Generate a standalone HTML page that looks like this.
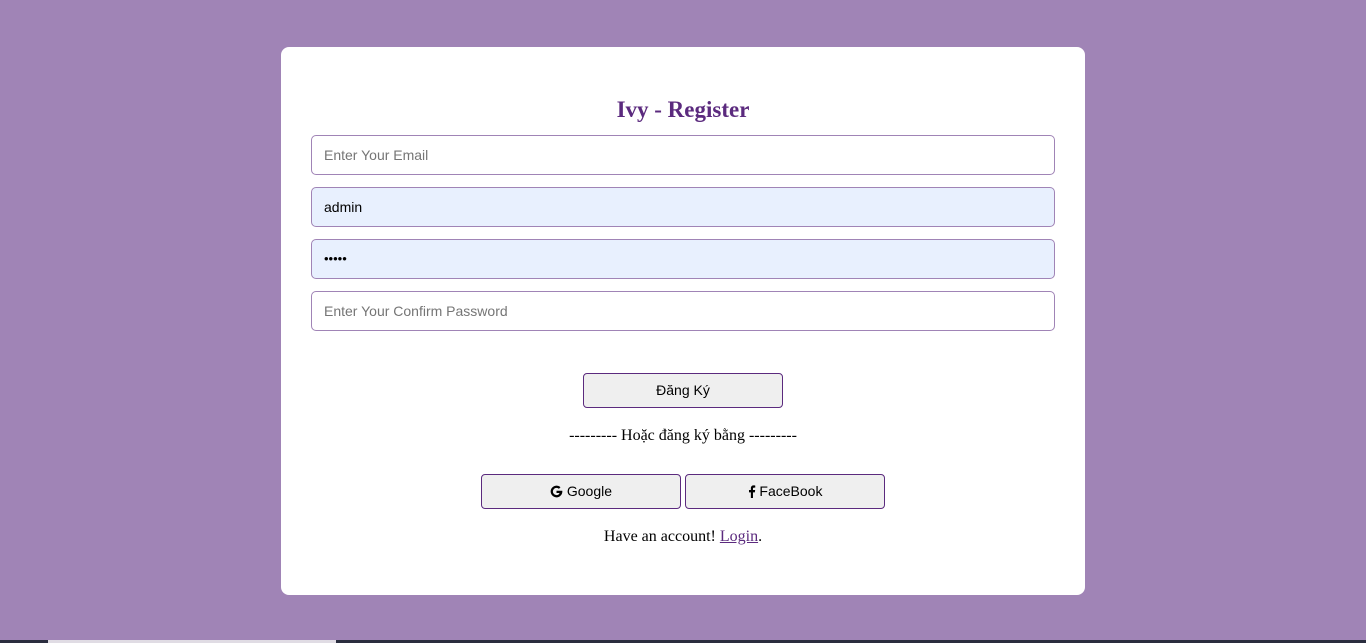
<!DOCTYPE html>
<html><head><meta charset="utf-8"><style>
body{margin:0;width:1366px;height:643px;background:#a084b6;position:relative;overflow:hidden;font-family:"Liberation Serif",serif}
.card{position:absolute;left:281px;top:47px;width:804px;height:548px;background:#fff;border-radius:8px}
h2{position:absolute;left:0;right:0;top:96px;margin:0;text-align:center;font-size:23px;font-weight:bold;color:#5b2a7e;line-height:28px}
.in{position:absolute;left:311px;height:38px;border:1px solid #a084b6;border-radius:5px;font-family:"Liberation Sans",sans-serif;font-size:14px;line-height:38px;padding-left:12px;width:730px}
.ph{color:#757575;background:#fff}.fl{color:#000;background:#e8f0fe}
.btn{position:absolute;height:33px;width:198px;border:1px solid #5b2a7e;border-radius:4px;background:#efefef;font-family:"Liberation Sans",sans-serif;font-size:14px;text-align:center;line-height:33px;color:#000}
.t{position:absolute;left:0;width:1366px;text-align:center;font-size:16px;color:#000}
a{color:#5b2a7e}
</style></head><body>
<div class="card"></div>
<h2>Ivy - Register</h2>
<div class="in ph" style="top:135px">Enter Your Email</div>
<div class="in fl" style="top:187px">admin</div>
<div class="in fl" style="top:239px;font-size:13px">•••••</div>
<div class="in ph" style="top:291px">Enter Your Confirm Password</div>
<div class="btn" style="left:583px;top:373px">Đăng Ký</div>
<div class="t" style="top:427px">--------- Hoặc đăng ký bằng ---------</div>
<div class="btn" style="left:481px;top:474px"><svg width="13" height="13" viewBox="0 0 16 16" style="vertical-align:-2px"><path d="M14.5 7H8v2.8h3.7c-.4 1.7-1.8 2.6-3.7 2.6a4.4 4.4 0 1 1 2.9-7.7l2-2A7.2 7.2 0 1 0 15.2 8c0-.4 0-.7-.1-1z" fill="#000"/></svg> Google</div>
<div class="btn" style="left:685px;top:474px"><svg width="8" height="13" viewBox="0 0 8 16" style="vertical-align:-2px"><path d="M5.2 16V9h2.3l.4-2.8H5.2V4.5c0-.8.3-1.3 1.4-1.3H8V.7C7.7.6 6.900.5 6 .5 4 .5 2.600 1.700 2.600 4v2.2H.3V9h2.3v7z" fill="#000"/></svg> FaceBook</div>
<div class="t" style="top:528px">Have an account! <a href="#">Login</a>.</div>
<div style="position:absolute;left:0;top:640px;width:1366px;height:3px;background:#2a2d3e"></div>
<div style="position:absolute;left:48px;top:640px;width:288px;height:3px;background:#e0dce4"></div>
</body></html>
